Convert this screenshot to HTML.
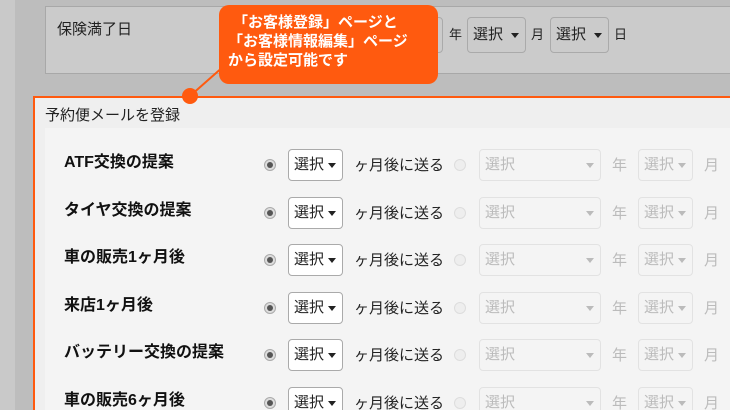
<!DOCTYPE html>
<html><head><meta charset="utf-8"><style>
*{box-sizing:border-box;margin:0;padding:0}
html{width:730px;height:410px;overflow:hidden}
body{width:730px;height:410px;overflow:hidden;position:relative;background:#bdbdbd;font-family:"Liberation Sans","Noto Sans CJK JP",sans-serif;color:#222}
.abs{position:absolute}
.sel{position:absolute;border:1px solid #aaa;border-radius:4px;font-size:15px;padding-left:5px;line-height:30px}
.sel:after{content:"";position:absolute;right:6px;top:50%;margin-top:-2px;border-left:4px solid transparent;border-right:4px solid transparent;border-top:5px solid #222}
.dis{border-color:#e2e2e2;color:#bbb;background:#f4f4f4}
.dis:after{border-top-color:#bbb}
.radio{position:absolute;width:12px;height:12px;border-radius:50%;border:1px solid #aaa;background:#ddd}
.radio.on:after{content:"";position:absolute;left:2px;top:2px;width:6px;height:6px;border-radius:50%;background:#555}
.lbl{position:absolute;left:64px;font-size:16px;font-weight:bold;color:#111}
.t{position:absolute;font-size:15px}
</style></head><body>
<div class="abs" style="left:0;top:0;width:15px;height:410px;background:#c9c9c9"></div>
<div class="abs" style="left:45px;top:6px;width:700px;height:68px;background:#cbcbcb;border:1px solid #a8a8a8"></div>
<div class="t" style="left:57px;top:18px;font-size:15px">保険満了日</div>
<div class="sel" style="left:410px;top:17px;width:33px;height:36px;border-color:#aaa"></div>
<div class="t" style="left:449px;top:24px;font-size:13px">年</div>
<div class="sel" style="left:467px;top:17px;width:59px;height:36px;line-height:34px;font-size:15px">選択</div>
<div class="t" style="left:531px;top:24px;font-size:13px">月</div>
<div class="sel" style="left:550px;top:17px;width:59px;height:36px;line-height:34px;font-size:15px">選択</div>
<div class="t" style="left:614px;top:24px;font-size:13px">日</div>

<div class="abs" style="left:33px;top:96px;width:720px;height:330px;border:2px solid #ff5a0f;background:#efefef"></div>
<div class="t" style="left:45px;top:104px;font-size:15px">予約便メールを登録</div>
<div class="abs" style="left:45px;top:128px;width:700px;height:290px;background:#f4f4f4"></div>

<svg class="abs" style="left:0;top:0" width="730" height="410"><line x1="190" y1="96" x2="224" y2="66" stroke="#ff5a0f" stroke-width="2"/><circle cx="190" cy="96" r="8" fill="#ff5a0f"/></svg>
<div class="abs" style="left:219px;top:5px;width:219px;height:79px;background:#ff5a0f;border-radius:10px;color:#fff;font-weight:bold;font-size:15px;line-height:19px;padding:8px 0 0 9px;white-space:nowrap">
<div style="padding-left:5px">「お客様登録」ページと</div><div>「お客様情報編集」ページ</div><div>から設定可能です</div></div>

<div id="rows"></div>
<script>
var labels=["ATF交換の提案","タイヤ交換の提案","車の販売1ヶ月後","来店1ヶ月後","バッテリー交換の提案","車の販売6ヶ月後"];
var h="";
labels.forEach(function(l,i){var c=165+i*47.6;
h+='<div class="lbl" style="top:'+(c-17)+'px">'+l+'</div>';
h+='<div class="radio on" style="left:264px;top:'+(c-6)+'px"></div>';
h+='<div class="sel" style="left:288px;top:'+(c-16)+'px;width:55px;height:32px;background:#fff">選択</div>';
h+='<div class="t" style="left:354px;top:'+(c-11)+'px">ヶ月後に送る</div>';
h+='<div class="radio" style="left:454px;top:'+(c-6)+'px;background:#eee;border-color:#ddd"></div>';
h+='<div class="sel dis" style="left:479px;top:'+(c-16)+'px;width:122px;height:32px">選択</div>';
h+='<div class="t" style="left:612px;top:'+(c-11)+'px;color:#bbb">年</div>';
h+='<div class="sel dis" style="left:638px;top:'+(c-16)+'px;width:55px;height:32px">選択</div>';
h+='<div class="t" style="left:704px;top:'+(c-11)+'px;color:#bbb">月</div>';});
document.getElementById("rows").innerHTML=h;
</script>
</body></html>
